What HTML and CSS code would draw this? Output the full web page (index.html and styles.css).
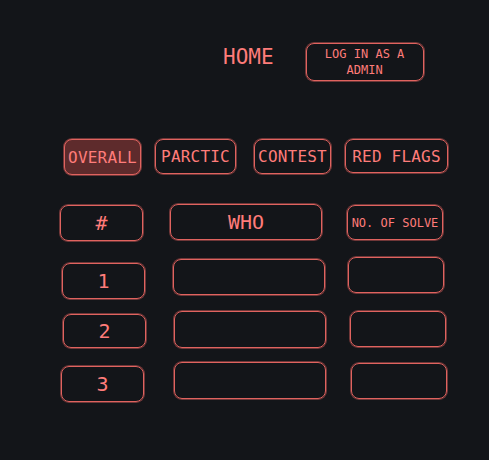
FILE: index.html
```html
<!DOCTYPE html>
<html>
<head>
<meta charset="utf-8">
<link rel="stylesheet" href="styles.css">
</head>
<body>
<div class="page">
  <header class="top">
    <span class="home">HOME</span>
    <button class="login">LOG IN AS A<br>ADMIN</button>
  </header>
  <nav class="tabs">
    <span class="tab tab-overall active">OVERALL</span>
    <span class="tab tab-parctic">PARCTIC</span>
    <span class="tab tab-contest">CONTEST</span>
    <span class="tab tab-red">RED FLAGS</span>
  </nav>
  <div class="board head">
    <div class="cell c1 big">#</div>
    <div class="cell c2 big">WHO</div>
    <div class="cell c3 small">NO. OF SOLVE</div>
  </div>
  <div class="board rows">
    <div class="cell c1 num">1</div>
    <div class="cell c2"></div>
    <div class="cell c3"></div>

    <div class="cell c1 num">2</div>
    <div class="cell c2"></div>
    <div class="cell c3"></div>

    <div class="cell c1 num">3</div>
    <div class="cell c2"></div>
    <div class="cell c3"></div>
  </div>
</div>
</body>
</html>
```
FILE: styles.css
```css
html, body {
  margin: 0;
  padding: 0;
  background: #131519;
}
.page {
  width: 489px;
  height: 460px;
  box-sizing: border-box;
  padding-top: 42px;
  font-family: "DejaVu Sans Mono", monospace;
  color: #ff7c7a;
}
.login, .tab, .cell {
  border: 1px solid #e0635f;
  box-shadow: 0 0 0 1px rgba(205, 90, 88, 0.5);
  border-radius: 8px;
}
.top {
  display: flex;
  align-items: center;
  padding-left: 223px;
  height: 40px;
}
.home {
  font-size: 21px;
  line-height: 1;
  margin-top: -10px;
}
.login {
  margin-left: 32px;
  width: 118px;
  height: 38px;
  box-sizing: border-box;
  background: transparent;
  color: #ff7c7a;
  font-family: "DejaVu Sans Mono", monospace;
  font-size: 12px;
  line-height: 16px;
  padding: 0;
}
.tabs {
  display: flex;
  align-items: flex-start;
  margin-top: 57px;
  padding-left: 64px;
  height: 36px;
}
.tab {
  box-sizing: border-box;
  height: 36px;
  display: flex;
  align-items: center;
  justify-content: center;
  font-size: 16px;
  letter-spacing: 0.2px;
}
.tab.active {
  background: #5e2b2c;
}
.tab-overall { width: 77px; }
.tab-parctic { width: 81px; margin-left: 14px; height: 35px; }
.tab-contest { width: 77px; margin-left: 18px; height: 35px; }
.tab-red { width: 103px; margin-left: 14px; height: 34px; }
.board {
  display: grid;
  grid-template-columns: 111px 176px 98px;
  padding-left: 60px;
  align-items: start;
}
.head {
  margin-top: 29px;
  grid-template-rows: 39px;
}
.rows {
  margin-top: 15px;
  grid-template-rows: 39px 39px 39px;
  row-gap: 13px;
}
.cell {
  box-sizing: border-box;
  height: 36px;
  display: flex;
  align-items: center;
  justify-content: center;
}
.c1 { width: 83px; }
.c2 { width: 152px; }
.c3 { width: 96px; }
.big { font-size: 20px; }
.small { font-size: 12px; }
.num { font-size: 20px; }

.head .cell:nth-child(1) { margin-left: 0px; margin-top: 1px; }
.head .cell:nth-child(2) { margin-left: -1px; }
.head .cell:nth-child(3) { margin-left: 0px; margin-top: 1px; height: 35px; }

.rows .cell:nth-child(1) { margin-left: 2px; margin-top: 5px; }
.rows .cell:nth-child(2) { margin-left: 2px; margin-top: 1px; }
.rows .cell:nth-child(3) { margin-left: 1px; margin-top: -1px; }
.rows .cell:nth-child(4) { margin-left: 3px; margin-top: 4px; height: 34px; }
.rows .cell:nth-child(5) { margin-left: 3px; margin-top: 1px; height: 37px; }
.rows .cell:nth-child(6) { margin-left: 3px; margin-top: 1px; }
.rows .cell:nth-child(7) { margin-left: 1px; margin-top: 4px; }
.rows .cell:nth-child(8) { margin-left: 3px; height: 37px; }
.rows .cell:nth-child(9) { margin-left: 4px; margin-top: 1px; }
```
